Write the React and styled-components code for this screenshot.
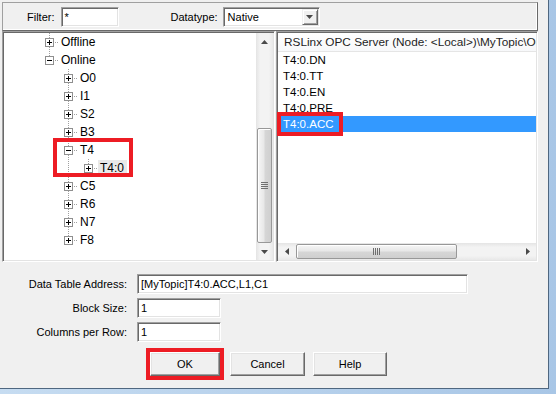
import React from 'react';
import styled, { createGlobalStyle } from 'styled-components';

const GlobalStyle = createGlobalStyle`
  html, body { margin: 0; padding: 0; }
  body {
    width: 556px;
    height: 394px;
    overflow: hidden;
    background: linear-gradient(to right, #c6dcf1, #a8c6e6);
    font-family: "Liberation Sans", Arial, sans-serif;
  }
`;

// tree geometry: x centre of the expander box for each depth
const CENTERS = [45, 64, 84];
const DOT = '#a0a0a0';

const TREE_TOP = [
  { label: 'Offline', level: 0, up: true, down: true },
  { label: 'Online', level: 0, open: true, up: true },
  { label: 'O0', level: 1, up: true, down: true },
  { label: 'I1', level: 1, up: true, down: true },
  { label: 'S2', level: 1, up: true, down: true },
  { label: 'B3', level: 1, up: true, down: true },
];

const TREE_MARKED = [
  { label: 'T4', level: 1, open: true, up: true, down: true },
  { label: 'T4:0', level: 2, up: true, rails: [1], current: true },
];

const TREE_REST = [
  { label: 'C5', level: 1, up: true, down: true },
  { label: 'R6', level: 1, up: true, down: true },
  { label: 'N7', level: 1, up: true, down: true },
  { label: 'F8', level: 1, up: true },
];

const TAGS = ['T4:0.DN', 'T4:0.TT', 'T4:0.EN', 'T4:0.PRE', 'T4:0.ACC'];

function Guides({ level, open, up, down, rails = [] }) {
  const c = CENTERS[level];
  const w = c + 10;
  return (
    <GuideSvg width={w} height={18}>
      <g stroke={DOT} strokeDasharray="1 1" shapeRendering="crispEdges">
        {rails.map(l => (
          <line key={l} x1={CENTERS[l] + 0.5} y1={0} x2={CENTERS[l] + 0.5} y2={18} />
        ))}
        {up && <line x1={c + 0.5} y1={0} x2={c + 0.5} y2={5} />}
        {down && <line x1={c + 0.5} y1={14} x2={c + 0.5} y2={18} />}
        <line x1={c + 6} y1={9.5} x2={w} y2={9.5} />
      </g>
      <g shapeRendering="crispEdges">
        <rect x={c - 3.5} y={5.5} width={8} height={8} fill="#fff" stroke="#8f8f8f" />
        <line x1={c - 2} y1={9.5} x2={c + 3} y2={9.5} stroke="#000" />
        {!open && <line x1={c + 0.5} y1={7} x2={c + 0.5} y2={12} stroke="#000" />}
      </g>
    </GuideSvg>
  );
}

function TreeRow({ item }) {
  return (
    <Row>
      <Guides {...item} />
      <NodeLabel $current={item.current}>{item.label}</NodeLabel>
    </Row>
  );
}

function Arrow({ dir }) {
  const pts = {
    up: '0,4 3.5,0 7,4',
    down: '0,0 3.5,4 7,0',
    left: '4,0 0,3.5 4,7',
    right: '0,0 4,3.5 0,7',
  }[dir];
  const vertical = dir === 'up' || dir === 'down';
  return (
    <svg width={vertical ? 7 : 4} height={vertical ? 4 : 7}>
      <polygon points={pts} fill="#4a4a4a" />
    </svg>
  );
}

function Grip({ vertical }) {
  return vertical ? (
    <svg width={7} height={7}>
      {[0, 2, 4, 6].map(y => (
        <rect key={y} x={0} y={y} width={7} height={1} fill="#6f6f6f" />
      ))}
    </svg>
  ) : (
    <svg width={7} height={7}>
      {[0, 2, 4, 6].map(x => (
        <rect key={x} x={x} y={0} width={1} height={7} fill="#6f6f6f" />
      ))}
    </svg>
  );
}

export default function App() {
  return (
    <>
      <GlobalStyle />
      <Dialog>
        <Toolbar>
          <ToolLabel>Filter:</ToolLabel>
          <Field $w={58} $ml={6}>*</Field>
          <ToolLabel $ml={52}>Datatype:</ToolLabel>
          <Combo>
            <ComboText>Native</ComboText>
            <ComboButton>
              <Arrow dir="down" />
            </ComboButton>
          </Combo>
        </Toolbar>

        <Split>
          <Panel $w={273}>
            <TreeArea>
              {TREE_TOP.map(item => <TreeRow key={item.label} item={item} />)}
              <Marked>
                {TREE_MARKED.map(item => <TreeRow key={item.label} item={item} />)}
              </Marked>
              {TREE_REST.map(item => <TreeRow key={item.label} item={item} />)}
            </TreeArea>
            <VScroll>
              <ArrowCell><Arrow dir="up" /></ArrowCell>
              <VTrack>
                <VThumb><Grip vertical /></VThumb>
              </VTrack>
              <ArrowCell><Arrow dir="down" /></ArrowCell>
            </VScroll>
          </Panel>

          <Panel $w={262} $column>
            <ListHeader>RSLinx OPC Server (Node: &lt;Local&gt;)\MyTopic\Online\T4:0</ListHeader>
            <TagList>
              {TAGS.map(tag => (
                <TagRow key={tag} $selected={tag === 'T4:0.ACC'}>
                  {tag === 'T4:0.ACC' ? <TagMark>{tag}</TagMark> : tag}
                </TagRow>
              ))}
            </TagList>
            <HScroll>
              <ArrowCell><Arrow dir="left" /></ArrowCell>
              <HTrack>
                <HThumb><Grip /></HThumb>
              </HTrack>
              <ArrowCell><Arrow dir="right" /></ArrowCell>
            </HScroll>
          </Panel>
        </Split>

        <Form>
          <FormLabel>Data Table Address:</FormLabel>
          <Field $w={331}>[MyTopic]T4:0.ACC,L1,C1</Field>
          <FormLabel>Block Size:</FormLabel>
          <Field $w={84}>1</Field>
          <FormLabel>Columns per Row:</FormLabel>
          <Field $w={84}>1</Field>
        </Form>

        <Buttons>
          <Button $w={70} $marked>OK</Button>
          <Button $w={75} $ml={10}>Cancel</Button>
          <Button $w={74} $ml={8}>Help</Button>
        </Buttons>
      </Dialog>
    </>
  );
}

const Dialog = styled.div`
  box-sizing: border-box;
  width: 549px;
  height: 389px;
  padding-top: 2px;
  background: #f0f0f0;
  border-right: 1px solid #4f6780;
  border-bottom: 1px solid #4f6780;
  display: flex;
  flex-direction: column;
`;

const Toolbar = styled.div`
  box-sizing: border-box;
  display: flex;
  align-items: center;
  width: 536px;
  height: 29px;
  margin-left: 2px;
  padding-left: 24px;
  border: 1px solid;
  border-color: #a0a0a0 #696969 #696969 #a0a0a0;
  box-shadow: inset -1px -1px 0 #ffffff;
`;

const ToolLabel = styled.span`
  margin-left: ${p => p.$ml || 0}px;
  font-size: 11px;
  color: #000;
`;

const Field = styled.div`
  box-sizing: border-box;
  width: ${p => p.$w}px;
  height: 20px;
  margin-left: ${p => p.$ml || 0}px;
  padding: 2px 3px 0;
  background: #fff;
  border: 1px solid;
  border-color: #a0a0a0 #ffffff #ffffff #a0a0a0;
  box-shadow: inset 1px 1px 0 #696969, inset -1px -1px 0 #e3e3e3;
  font-size: 11px;
  line-height: 15px;
  color: #000;
  white-space: nowrap;
  overflow: hidden;
`;

const Combo = styled.div`
  box-sizing: border-box;
  display: flex;
  align-items: center;
  width: 97px;
  height: 20px;
  margin-left: 5px;
  padding: 1px;
  background: #fff;
  border: 1px solid;
  border-color: #a0a0a0 #ffffff #ffffff #a0a0a0;
  box-shadow: inset 1px 1px 0 #696969, inset -1px -1px 0 #e3e3e3;
`;

const ComboText = styled.span`
  flex: 1;
  padding-left: 3px;
  font-size: 11px;
  color: #000;
`;

const ComboButton = styled.div`
  box-sizing: border-box;
  display: flex;
  align-items: center;
  justify-content: center;
  width: 16px;
  height: 16px;
  background: #f0f0f0;
  border: 1px solid;
  border-color: #f0f0f0 #696969 #696969 #f0f0f0;
  box-shadow: inset 1px 1px 0 #ffffff, inset -1px -1px 0 #a0a0a0;
`;

const Split = styled.div`
  display: flex;
  gap: 1px;
  height: 231px;
  margin-left: 2px;
`;

const Panel = styled.div`
  box-sizing: border-box;
  display: flex;
  flex-direction: ${p => (p.$column ? 'column' : 'row')};
  width: ${p => p.$w}px;
  height: 100%;
  padding: 1px;
  background: #fff;
  border: 1px solid;
  border-color: #a0a0a0 #ffffff #ffffff #a0a0a0;
  box-shadow: inset 1px 1px 0 #696969, inset -1px -1px 0 #e3e3e3;
`;

const TreeArea = styled.div`
  flex: 1;
  overflow: hidden;
  background: #fff;
`;

const Row = styled.div`
  display: flex;
  align-items: center;
  height: 18px;
`;

const GuideSvg = styled.svg`
  flex: none;
  display: block;
`;

const NodeLabel = styled.span`
  height: 16px;
  padding: 0 3px 0 2px;
  font-size: 12px;
  line-height: 16px;
  color: #000;
  background: ${p => (p.$current ? '#e9e9e9' : 'transparent')};
`;

const Marked = styled.div`
  position: relative;

  &::after {
    content: '';
    position: absolute;
    left: 49px;
    top: -3px;
    width: 80px;
    height: 39px;
    box-sizing: border-box;
    border: 4px solid #ed1c24;
    pointer-events: none;
  }
`;

const VScroll = styled.div`
  display: flex;
  flex-direction: column;
  width: 17px;
  background: linear-gradient(to right, #e4e4e4, #f3f3f3 25%, #f3f3f3 75%, #e8e8e8);
`;

const HScroll = styled.div`
  display: flex;
  height: 17px;
  background: linear-gradient(to bottom, #e4e4e4, #f3f3f3 25%, #f3f3f3 75%, #e8e8e8);
`;

const ArrowCell = styled.div`
  display: flex;
  align-items: center;
  justify-content: center;
  flex: none;
  width: 17px;
  height: 17px;
`;

const VTrack = styled.div`
  flex: 1;
  display: flex;
  flex-direction: column;
  justify-content: flex-end;
`;

const VThumb = styled.div`
  box-sizing: border-box;
  display: flex;
  align-items: center;
  justify-content: center;
  height: 115px;
  margin: 0 1px;
  border: 1px solid #989898;
  border-radius: 2px;
  background: linear-gradient(to right, #f6f6f6, #e8e8e8 45%, #d6d6d6 55%, #cfcfcf);
  box-shadow: inset 1px 1px 0 #ffffff;
`;

const HTrack = styled.div`
  flex: 1;
  display: flex;
  padding-left: 1px;
`;

const HThumb = styled.div`
  box-sizing: border-box;
  display: flex;
  align-items: center;
  justify-content: center;
  width: 161px;
  margin: 1px 0;
  border: 1px solid #989898;
  border-radius: 2px;
  background: linear-gradient(to bottom, #f6f6f6, #e8e8e8 45%, #d6d6d6 55%, #cfcfcf);
  box-shadow: inset 1px 1px 0 #ffffff;
`;

const ListHeader = styled.div`
  box-sizing: border-box;
  flex: none;
  height: 19px;
  padding-left: 6px;
  border-bottom: 1px solid #e5e5e5;
  background: linear-gradient(to bottom, #ffffff, #f7f8fa);
  font-size: 11.8px;
  line-height: 18px;
  color: #1e1e1e;
  white-space: nowrap;
  overflow: hidden;
`;

const TagList = styled.div`
  flex: 1;
  background: #fff;
`;

const TagRow = styled.div`
  height: 16px;
  padding-left: 5px;
  font-size: 11.5px;
  line-height: 16px;
  color: ${p => (p.$selected ? '#ffffff' : '#000000')};
  background: ${p => (p.$selected ? '#3399ff' : 'transparent')};
  white-space: nowrap;
`;

const TagMark = styled.span`
  display: inline-block;
  height: 16px;
  margin-left: -2px;
  padding: 0 5px 0 2px;
  outline: 4px solid #ed1c24;
`;

const Form = styled.div`
  display: grid;
  grid-template-columns: 127px auto;
  grid-auto-rows: 20px;
  column-gap: 10px;
  row-gap: 4px;
  justify-items: start;
  align-items: center;
  margin-top: 12px;
`;

const FormLabel = styled.span`
  justify-self: end;
  font-size: 11px;
  color: #000;
`;

const Buttons = styled.div`
  display: flex;
  margin-top: 10px;
  padding-left: 150px;
`;

const Button = styled.button`
  box-sizing: border-box;
  width: ${p => p.$w}px;
  height: 24px;
  margin-left: ${p => p.$ml || 0}px;
  padding: 0;
  background: #f0f0f0;
  border: 1px solid;
  border-color: #ffffff #696969 #696969 #ffffff;
  box-shadow: inset -1px -1px 0 #a0a0a0, inset 1px 1px 0 #e3e3e3;
  font-family: "Liberation Sans", Arial, sans-serif;
  font-size: 11px;
  color: #000;
  outline: ${p => (p.$marked ? '4px solid #ed1c24' : 'none')};
`;
